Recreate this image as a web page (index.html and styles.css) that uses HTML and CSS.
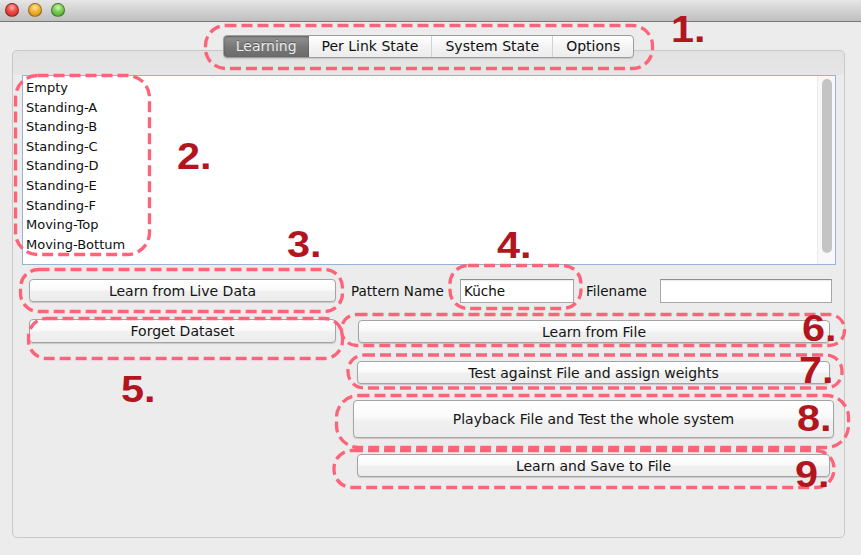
FILE: index.html
```html
<!DOCTYPE html>
<html>
<head>
<meta charset="utf-8">
<title>Learning</title>
<link rel="stylesheet" href="styles.css">
</head>
<body>
<div class="screen">
  <div class="titlebar">
    <span class="light light-red"></span>
    <span class="light light-yellow"></span>
    <span class="light light-green"></span>
  </div>
  <div class="window">
    <div class="tabs-row">
      <div class="tabs">
        <span class="tab tab-active">Learning</span>
        <span class="tab">Per Link State</span>
        <span class="tab tab-sep">System State</span>
        <span class="tab tab-sep">Options</span>
      </div>
    </div>
    <div class="panel">
      <div class="list">
        <ul class="items">
          <li>Empty</li>
          <li>Standing-A</li>
          <li>Standing-B</li>
          <li>Standing-C</li>
          <li>Standing-D</li>
          <li>Standing-E</li>
          <li>Standing-F</li>
          <li>Moving-Top</li>
          <li>Moving-Bottum</li>
        </ul>
        <div class="scrollbar"><div class="thumb"></div></div>
      </div>
      <div class="controls">
        <div class="col-left">
          <button class="btn btn-live">Learn from Live Data</button>
          <button class="btn btn-forget">Forget Dataset</button>
        </div>
        <div class="col-right">
          <div class="fields">
            <span class="field-label label-pattern">Pattern Name</span>
            <div class="textbox box-pattern">Küche</div>
            <span class="field-label label-filename">Filename</span>
            <div class="textbox box-filename"></div>
          </div>
          <button class="btn btn-learn-file">Learn from File</button>
          <button class="btn btn-test">Test against File and assign weights</button>
          <button class="btn btn-playback">Playback File and Test the whole system</button>
          <button class="btn btn-save">Learn and Save to File</button>
        </div>
      </div>
    </div>
  </div>

  <svg class="annotations" width="861" height="555" viewBox="0 0 861 555">
    <rect x="205.5" y="25.5" width="447" height="43" rx="20"/>
    <rect x="15.5" y="75.5" width="134" height="179" rx="22"/>
    <rect x="20.5" y="269.5" width="322" height="42" rx="18"/>
    <rect x="450" y="265.5" width="131" height="43" rx="18"/>
    <rect x="28.5" y="318.5" width="314" height="40" rx="18"/>
    <rect x="341.5" y="314.5" width="503" height="31" rx="15"/>
    <rect x="348" y="355" width="494" height="33" rx="16"/>
    <rect x="336.5" y="395.5" width="512" height="52" rx="22"/>
    <rect x="334" y="450.5" width="500" height="37" rx="18"/>
  </svg>
  <span class="num num-1">1.</span>
  <span class="num num-2">2.</span>
  <span class="num num-3">3.</span>
  <span class="num num-4">4.</span>
  <span class="num num-5">5.</span>
  <span class="num num-6">6.</span>
  <span class="num num-7">7.</span>
  <span class="num num-8">8.</span>
  <span class="num num-9">9.</span>
</div>
</body>
</html>
```

FILE: styles.css
```css
* { box-sizing: border-box; }

html, body {
  margin: 0;
  padding: 0;
  background: #ececec;
}

.screen {
  position: relative;
  width: 861px;
  height: 555px;
  overflow: hidden;
  background: #ececec;
  font-family: "DejaVu Sans", "Liberation Sans", sans-serif;
  color: #111111;
}

/* title bar */
.titlebar {
  height: 22px;
  display: flex;
  align-items: center;
  gap: 9px;
  padding: 0 0 1px 5px;
  background: linear-gradient(#e6e6e6, #d0d0d0 55%, #bfbfbf);
  border-bottom: 1px solid #777777;
}

.light {
  width: 14px;
  height: 14px;
  border-radius: 50%;
  border: 1px solid rgba(0, 0, 0, 0.35);
}
.light-red {
  background: radial-gradient(circle at 50% 30%, #ffb3ad 0, #f0524b 40%, #c21d18 100%);
}
.light-yellow {
  background: radial-gradient(circle at 50% 30%, #ffe7a8 0, #f4b634 40%, #c98410 100%);
}
.light-green {
  background: radial-gradient(circle at 50% 30%, #d4f7b8 0, #7fd05a 40%, #3f9a24 100%);
}

/* window */
.window {
  padding: 13px 16px 0 12px;
}

.tabs-row {
  display: flex;
  justify-content: center;
  margin-bottom: -8px;
  position: relative;
  z-index: 1;
}

.tabs {
  display: flex;
  height: 23px;
  border: 1px solid #9d9d9d;
  border-radius: 4px;
  background: linear-gradient(#ffffff, #f4f4f4 50%, #ececec);
  box-shadow: 0 1px 1px rgba(0, 0, 0, 0.12);
}

.tab {
  padding: 0 13px;
  line-height: 21px;
  font-size: 14px;
  color: #111111;
}
.tab-sep {
  border-left: 1px solid #d2d2d2;
}
.tab-active {
  background: linear-gradient(#939393, #767676 55%, #6b6b6b);
  color: #ececec;
  text-shadow: 0 -1px 0 rgba(0, 0, 0, 0.35);
  border-radius: 3px 0 0 3px;
  padding: 0 12px 0 12px;
  box-shadow: inset 0 1px 2px rgba(0, 0, 0, 0.35);
}

.panel {
  height: 488px;
  border: 1px solid #c8c8c8;
  border-radius: 5px;
  padding: 24px 8px 0 9px;
  background: linear-gradient(#e2e2e2, #e6e6e6 24px, #ececec 24px);
}

/* list */
.list {
  height: 190px;
  display: flex;
  border: 1px solid #94b3d6;
  background: #ffffff;
}

.items {
  flex: 1;
  margin: 0;
  padding: 2px 0 0 3px;
  list-style: none;
  font-size: 13px;
  line-height: 19.6px;
  color: #0e0e0e;
}

.scrollbar {
  width: 18px;
  padding: 3px 3px 0 4px;
  background: #f8f8f8;
  border-left: 1px solid #ebebeb;
}
.thumb {
  width: 10px;
  height: 174px;
  border-radius: 5px;
  background: #c4c4c4;
}

/* controls */
.controls {
  display: flex;
  margin-top: 14px;
  padding-left: 7px;
}

.col-left {
  width: 307px;
  display: flex;
  flex-direction: column;
}

.col-right {
  flex: 1;
  margin-left: 7px;
  display: flex;
  flex-direction: column;
}

.btn {
  display: block;
  margin: 0;
  padding: 0;
  font-family: "DejaVu Sans", "Liberation Sans", sans-serif;
  font-size: 14px;
  color: #141414;
  text-align: center;
  border: 1px solid #a4a4a4;
  border-radius: 4px;
  background: linear-gradient(#ffffff, #fafafa 45%, #f0f0f0 55%, #ececec);
  box-shadow: 0 1px 1px rgba(0, 0, 0, 0.15);
}

.btn-live { height: 23px; }
.btn-forget { height: 24px; margin-top: 17px; }

.fields {
  display: flex;
  align-items: center;
  height: 24px;
  font-size: 13.5px;
}
.field-label {
  color: #111111;
}
.label-pattern {
  width: 117px;
  padding-left: 8px;
}
.label-filename {
  width: 86px;
  padding-left: 12px;
}
.textbox {
  height: 24px;
  border: 1px solid #a8a8a8;
  border-top-color: #8e8e8e;
  background: #ffffff;
  box-shadow: inset 0 1px 1px rgba(0, 0, 0, 0.08);
  padding: 0 3px;
  line-height: 22px;
  color: #0e0e0e;
}
.box-pattern { width: 114px; }
.box-filename { width: 172px; }

.btn-learn-file { height: 23px; margin: 17px 6px 0 15px; }
.btn-test { height: 23px; margin: 18px 6px 0 14px; }
.btn-playback { height: 38px; margin: 16px 2px 0 10px; }
.btn-save { height: 23px; margin: 16px 6px 0 14px; }

/* annotations overlay */
.annotations {
  position: absolute;
  left: 0;
  top: 0;
  pointer-events: none;
}
.annotations rect {
  fill: none;
  stroke: #fd6379;
  stroke-width: 3.3;
  stroke-dasharray: 11 5;
}

.num {
  position: absolute;
  font-family: "Liberation Sans", Arial, sans-serif;
  font-weight: bold;
  font-size: 37px;
  line-height: 1;
  color: #b3151e;
  transform: scaleX(1.12);
  transform-origin: left top;
}
.num-1 { left: 671px; top: 11px; }
.num-2 { left: 177px; top: 138px; }
.num-3 { left: 287px; top: 226px; }
.num-4 { left: 497px; top: 227px; }
.num-5 { left: 121px; top: 371px; }
.num-6 { left: 802px; top: 310px; }
.num-7 { left: 799px; top: 352px; }
.num-8 { left: 797px; top: 400px; }
.num-9 { left: 795px; top: 456px; }
```
